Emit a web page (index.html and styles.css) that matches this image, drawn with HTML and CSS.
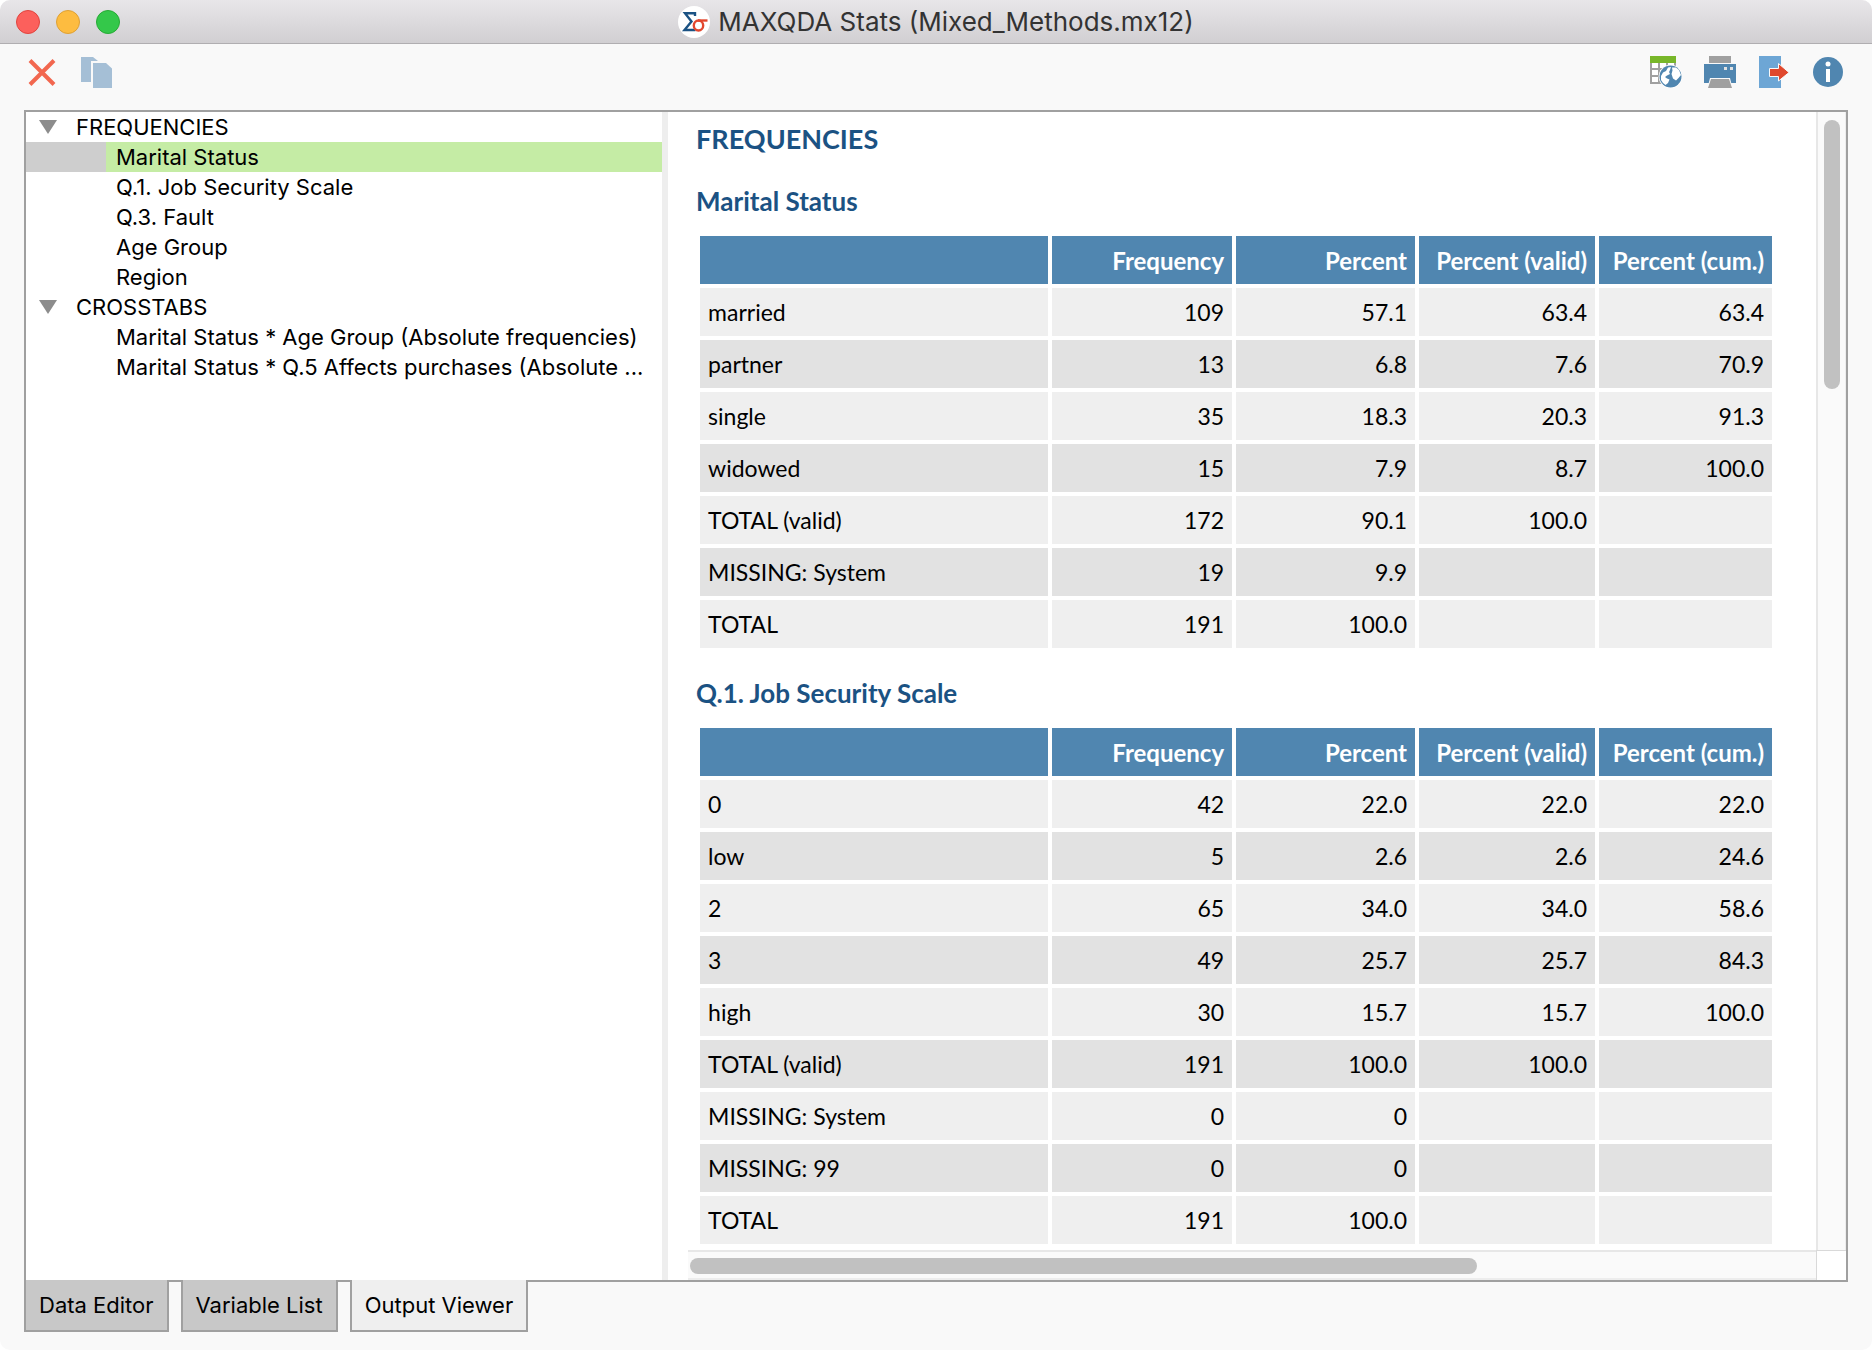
FILE: index.html
```
<!DOCTYPE html>
<html lang="en">
<head>
<meta charset="utf-8">
<title>MAXQDA Stats (Mixed_Methods.mx12)</title>
<meta name="viewport" content="width=device-width, initial-scale=1">
<link rel="stylesheet" href="styles.css">
</head>

<body>
<div class="window">

<header class="titlebar">
	<div class="lights">
		<button class="light close" aria-label="Close"></button>
		<button class="light minimize" aria-label="Minimize"></button>
		<button class="light maximize" aria-label="Zoom"></button>
	</div>
	<div class="title">
		<svg class="logo" viewBox="0 0 32 32">
			<circle cx="16" cy="16" r="16" fill="#fff"/>
			<path d="M17 10V7.200H7L13.500 15.500 6.500 24H17.500" fill="none" stroke="#1b5283" stroke-width="2.400"/>
			<path d="M29.500 14.500H20" stroke="#e2472f" stroke-width="2.400"/>
			<ellipse cx="20.500" cy="19.500" rx="4.700" ry="5" fill="none" stroke="#e2472f" stroke-width="2.400"/>
		</svg>
		<span>MAXQDA Stats (Mixed_Methods.mx12)</span>
	</div>
</header>

<div class="toolbar">
	<div class="tools">
		<button class="tool" aria-label="Delete">
			<svg viewBox="0 0 32 32"><path d="M4 4.500L28 28.500M28 4.500L4 28.500" stroke="#f2674f" stroke-width="4"/></svg>
		</button>
		<button class="tool" aria-label="Copy">
			<svg viewBox="0 0 32 32" fill="#a5bfd6"><path d="M1 1H13L18 5H11V26H1z"/><path d="M13 7H26L32 12.500V32H13z"/></svg>
		</button>
	</div>
	<div class="tools">
		<button class="tool" aria-label="Export to web">
			<svg viewBox="0 0 32 32">
				<path d="M0 7H26V28H0z" fill="#a0a0a0"/>
				<path d="M2 7h6v5H2zM10 7h6v5h-6zM18 7h6v5h-6zM2 14h6v5H2zM10 14h6v5h-6zM2 21h6v5H2zM18 14h6v5h-6z" fill="#fff"/>
				<path d="M0 0H26V7H0z" fill="#78b72a"/>
				<circle cx="20.500" cy="20.500" r="11.800" fill="#fff"/>
				<circle cx="20.500" cy="20.500" r="11" fill="#5086b0"/>
				<path d="M11 20L13 16.500 16 15 18 11.500 21 11 20 14 19 16 20 18 17 19.500 15 21 17 22.500 19.500 23.500 18 27 15.500 29 13 27 11 24z" fill="#fff"/>
				<path d="M22 11.500L26 11.500 29 14 31 19 28.500 22 26 24.500 23 22.500 21.500 18 22.500 14.500z" fill="#fff"/>
			</svg>
		</button>
		<button class="tool" aria-label="Print">
			<svg viewBox="0 0 32 32">
				<path d="M5 0H27V7H5z" fill="#a0a0a0"/>
				<path d="M0 8H32V27H0z" fill="#5086b0"/>
				<path d="M20 11h3v3h-3zM26 11h3v3h-3z" fill="#e2e2e2"/>
				<path d="M6 22H26L28.500 32H3.500z" fill="#f9f9f9"/>
				<path d="M7 23H25L28 32H4z" fill="#a0a0a0"/>
			</svg>
		</button>
		<button class="tool" aria-label="Exit">
			<svg viewBox="0 0 32 32">
				<path d="M1 0H23V32H1z" fill="#6da6d5"/>
				<path d="M11.500 12.500H20.500V7.500L31 16.500 20.500 25V20.500H11.500z" fill="#e0482d" stroke="#f9f9f9"/>
			</svg>
		</button>
		<button class="tool" aria-label="Info">
			<svg viewBox="0 0 32 32">
				<circle cx="16" cy="16" r="15" fill="#5086b0"/>
				<circle cx="16" cy="8" r="2.500" fill="#fff"/>
				<path d="M14 13H18V26H14z" fill="#fff"/>
			</svg>
		</button>
	</div>
</div>

<main class="frame">
	<nav class="tree">
		<ul>
			<li><button class="node"><svg class="arrow" viewBox="0 0 18 14"><path d="M0 0H18L9 14z"/></svg>FREQUENCIES</button>
				<ul>
					<li class="selected"><a class="leaf" href="#marital">Marital Status</a></li>
					<li><a class="leaf" href="#security">Q.1. Job Security Scale</a></li>
					<li><a class="leaf" href="#fault">Q.3. Fault</a></li>
					<li><a class="leaf" href="#age">Age Group</a></li>
					<li><a class="leaf" href="#region">Region</a></li>
				</ul>
			</li>
			<li><button class="node"><svg class="arrow" viewBox="0 0 18 14"><path d="M0 0H18L9 14z"/></svg>CROSSTABS</button>
				<ul>
					<li><a class="leaf" href="#cross1">Marital Status * Age Group (Absolute frequencies)</a></li>
					<li><a class="leaf" href="#cross2">Marital Status * Q.5 Affects purchases (Absolute ...</a></li>
				</ul>
			</li>
		</ul>
	</nav>

	<div class="splitter"></div>

	<section class="output">
		<div class="report">
			<h1>FREQUENCIES</h1>

			<h2 id="marital">Marital Status</h2>
			<table>
				<colgroup><col class="label"><col class="freq"><col class="pct"><col class="valid"><col class="cum"></colgroup>
				<thead>
					<tr><th></th><th>Frequency</th><th>Percent</th><th>Percent (valid)</th><th>Percent (cum.)</th></tr>
				</thead>
				<tbody>
					<tr><td>married</td><td>109</td><td>57.1</td><td>63.4</td><td>63.4</td></tr>
					<tr><td>partner</td><td>13</td><td>6.8</td><td>7.6</td><td>70.9</td></tr>
					<tr><td>single</td><td>35</td><td>18.3</td><td>20.3</td><td>91.3</td></tr>
					<tr><td>widowed</td><td>15</td><td>7.9</td><td>8.7</td><td>100.0</td></tr>
					<tr><td>TOTAL (valid)</td><td>172</td><td>90.1</td><td>100.0</td><td></td></tr>
					<tr><td>MISSING: System</td><td>19</td><td>9.9</td><td></td><td></td></tr>
					<tr><td>TOTAL</td><td>191</td><td>100.0</td><td></td><td></td></tr>
				</tbody>
			</table>

			<h2 id="security">Q.1. Job Security Scale</h2>
			<table>
				<colgroup><col class="label"><col class="freq"><col class="pct"><col class="valid"><col class="cum"></colgroup>
				<thead>
					<tr><th></th><th>Frequency</th><th>Percent</th><th>Percent (valid)</th><th>Percent (cum.)</th></tr>
				</thead>
				<tbody>
					<tr><td>0</td><td>42</td><td>22.0</td><td>22.0</td><td>22.0</td></tr>
					<tr><td>low</td><td>5</td><td>2.6</td><td>2.6</td><td>24.6</td></tr>
					<tr><td>2</td><td>65</td><td>34.0</td><td>34.0</td><td>58.6</td></tr>
					<tr><td>3</td><td>49</td><td>25.7</td><td>25.7</td><td>84.3</td></tr>
					<tr><td>high</td><td>30</td><td>15.7</td><td>15.7</td><td>100.0</td></tr>
					<tr><td>TOTAL (valid)</td><td>191</td><td>100.0</td><td>100.0</td><td></td></tr>
					<tr><td>MISSING: System</td><td>0</td><td>0</td><td></td><td></td></tr>
					<tr><td>MISSING: 99</td><td>0</td><td>0</td><td></td><td></td></tr>
					<tr><td>TOTAL</td><td>191</td><td>100.0</td><td></td><td></td></tr>
				</tbody>
			</table>
		</div>
		<div class="vscroll"><div class="thumb"></div></div>
		<div class="hscroll"><div class="thumb"></div></div>
		<div class="corner"></div>
	</section>
</main>

<footer class="tabs">
	<button class="tab">Data Editor</button>
	<button class="tab">Variable List</button>
	<button class="tab active">Output Viewer</button>
</footer>

</div>
</body>
</html>
```
FILE: styles.css
```
* {
	box-sizing: border-box;
}
body {
	margin: 0;
	background: white;
	font-family: Inter, sans-serif;
	font-size: 22px;
	color: black;
}
button {
	border: 0;
	padding: 0;
	background: none;
	font: inherit;
	color: inherit;
}
.window {
	display: flex;
	flex-direction: column;
	height: 100vh;
	background: #f9f9f9;
	border-radius: 10px;
	overflow: hidden;
}

/* title bar */
.titlebar {
	display: grid;
	grid-template-columns: 1fr auto 1fr;
	align-items: center;
	height: 44px;
	padding: 0 16px;
	background: linear-gradient(#e8e6e9, #d1cfd2);
	border-bottom: 1px solid #b0aeb1;
}
.lights {
	display: flex;
	gap: 16px;
}
.light {
	width: 24px;
	height: 24px;
	border-radius: 50%;
}
.close {
	background: #fc605c;
	border: 1px solid #e0443e;
}
.minimize {
	background: #fdbc40;
	border: 1px solid #dea034;
}
.maximize {
	background: #34c84a;
	border: 1px solid #27aa35;
}
.title {
	display: flex;
	align-items: center;
	gap: 8px;
	font-size: 26px;
	color: #333;
}
.logo {
	width: 32px;
	height: 32px;
}

/* toolbar */
.toolbar {
	display: flex;
	justify-content: space-between;
	padding: 12px 28px 22px 26px;
}
.tools {
	display: flex;
	gap: 22px;
}
.tool, .tool svg {
	display: block;
	width: 32px;
	height: 32px;
}

/* main frame */
.frame {
	flex: 1;
	min-height: 0;
	display: grid;
	grid-template-columns: minmax(0, 54fr) 6px minmax(0, 100fr);
	margin: 0 24px;
	background: white;
	border: 2px solid #a0a0a0;
}
.splitter {
	background: #eee;
}

.tree {
	overflow: hidden;
	line-height: 30px;
	white-space: nowrap;
}
.tree ul {
	margin: 0;
	padding: 0;
	list-style: none;
}
.node {
	display: flex;
	align-items: center;
	gap: 19px;
	height: 30px;
	padding-left: 13px;
}
.arrow {
	width: 18px;
	height: 14px;
	fill: #8c8c8c;
}
.leaf {
	display: block;
	margin-left: 80px;
	padding-left: 10px;
	color: inherit;
	text-decoration: none;
}
.selected {
	background: #cecece;
}
.selected .leaf {
	background: #c5eca5;
}

/* report */
.output {
	display: grid;
	grid-template-columns: minmax(0, 1fr) 30px;
	grid-template-rows: minmax(0, 1fr) 30px;
	min-height: 0;
}
.report {
	overflow: hidden;
	padding: 8px 40px 0 28px;
	font-family: Lato, sans-serif;
	font-size: 23px;
}
h1, h2 {
	margin: 0;
	color: #1b5283;
	font-weight: bold;
	line-height: 38px;
}
h1 {
	padding-bottom: 2px;
	font-size: 27px;
}
h2 {
	margin-top: 22px;
	font-size: 26px;
}
table {
	width: 100%;
	margin-top: 12px;
	table-layout: fixed;
	border-spacing: 4px;
}
.label { width: 348px; }
.freq { width: 180px; }
.pct { width: 179px; }
.valid { width: 176px; }
.cum { width: 173px; }
th, td {
	height: 48px;
	padding: 0 8px;
	text-align: right;
	white-space: nowrap;
}
th {
	background: #5086b0;
	color: white;
	font-size: 24px;
}
td {
	background: #efefef;
}
td:first-child {
	text-align: left;
}
tr:nth-child(even) td {
	background: #e2e2e2;
}

.vscroll {
	padding: 8px 6px;
	background: #fafafa;
	border-left: 2px solid #e7e7e7;
	border-right: 1px solid #ededed;
}
.hscroll {
	margin-left: 20px;
	padding: 6px 2px;
	background: #fafafa;
	border-top: 2px solid #e7e7e7;
	border-bottom: 2px solid #ededed;
}
.thumb {
	background: #c1c1c1;
	border-radius: 8px;
}
.vscroll .thumb {
	width: 16px;
	height: 24%;
}
.hscroll .thumb {
	width: 70%;
	height: 16px;
}
.corner {
	border-left: 1px solid #d9d9d9;
	border-top: 1px solid #d9d9d9;
}

/* bottom tabs hang from the frame border */
.tabs {
	display: flex;
	gap: 12px;
	margin: -2px 24px 18px;
	z-index: 1;
}
.tab {
	height: 52px;
	padding: 0 13px;
	background: #c8c8c8;
	border: 2px solid #a0a0a0;
	border-top: 0;
}
.tab.active {
	background: #efefef;
}
```
